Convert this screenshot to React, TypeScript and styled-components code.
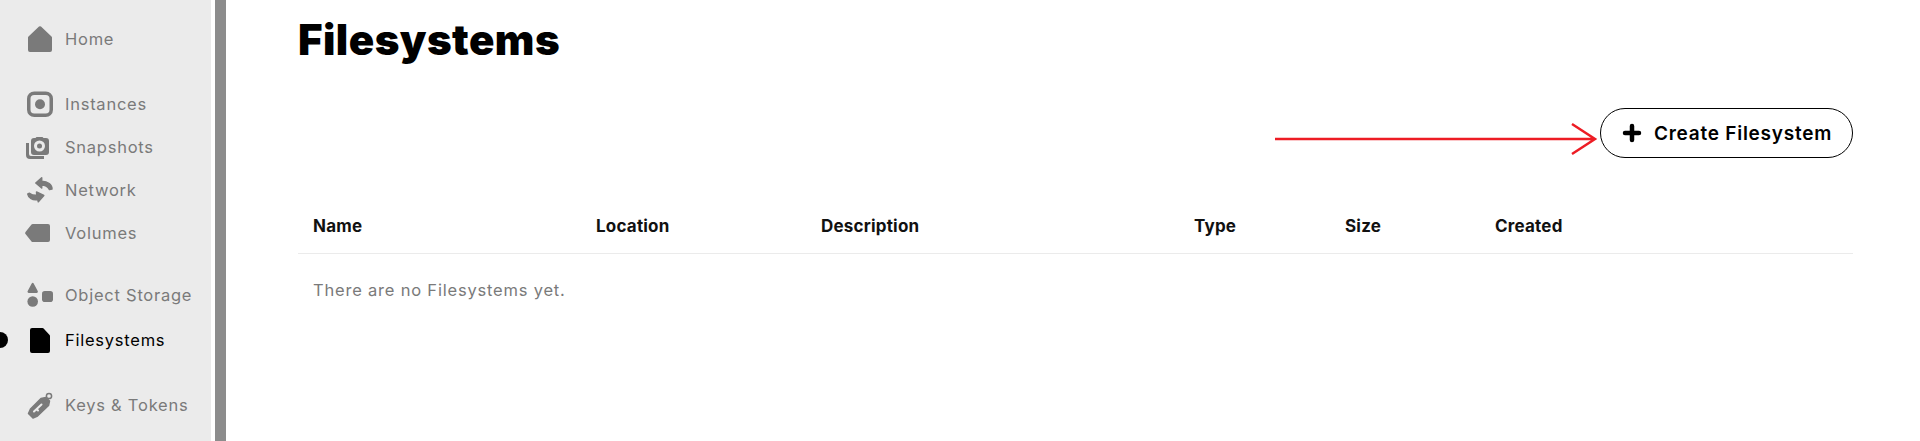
import React from 'react';
import styled, { createGlobalStyle } from 'styled-components';

const GlobalStyle = createGlobalStyle`
  html, body {
    margin: 0;
    padding: 0;
    height: 441px;
    overflow: hidden;
    background: #fff;
    font-family: Inter, "Liberation Sans", sans-serif;
  }
`;

const Shell = styled.div`
  display: flex;
  height: 441px;
  overflow: hidden;
`;

const Sidebar = styled.nav`
  width: 211px;
  flex: none;
  background: #ebebeb;
  padding-top: 17px;
  box-sizing: border-box;
`;

const Scrollbar = styled.div`
  width: 11px;
  flex: none;
  margin-left: 4px;
  background: #8c8c8c;
`;

const NavGroup = styled.div<{ $top?: number; $gap?: number }>`
  display: flex;
  flex-direction: column;
  gap: ${({ $gap }) => $gap ?? 0}px;
  margin-top: ${({ $top }) => $top ?? 0}px;
`;

const NavItem = styled.a<{ $active?: boolean }>`
  position: relative;
  display: flex;
  align-items: center;
  height: 43px;
  padding-left: 25px;
  font-size: 16.5px;
  letter-spacing: 0.75px;
  color: ${({ $active }) => ($active ? '#000' : '#7a7a7a')};
`;

const ActiveDot = styled.span`
  position: absolute;
  left: -8px;
  top: 14px;
  width: 16px;
  height: 16px;
  border-radius: 50%;
  background: #000;
`;

const NavIcon = styled.svg`
  width: 30px;
  height: 30px;
  flex: none;
  margin-right: 10px;
  fill: currentColor;
`;

const KeyHole = styled.path`
  fill: none;
  stroke: #ebebeb;
  stroke-width: 2;
  stroke-linecap: round;
`;

const Main = styled.main`
  flex: 1;
  min-width: 0;
  padding: 0 67px 0 72px;
`;

const Title = styled.h1`
  margin: 0;
  padding-top: 16px;
  height: 48px;
  font-size: 42px;
  line-height: 48px;
  font-weight: 900;
  letter-spacing: 0.45px;
  color: #000;
`;

const Toolbar = styled.div`
  position: relative;
  display: flex;
  justify-content: flex-end;
  margin-top: 44px;
`;

const CreateButton = styled.button`
  display: flex;
  align-items: center;
  gap: 12px;
  width: 253px;
  height: 50px;
  padding: 0 0 0 21px;
  box-sizing: border-box;
  border: 1px solid #000;
  border-radius: 25px;
  background: #fff;
  color: #000;
  font-family: inherit;
  font-size: 19px;
  font-weight: 600;
  letter-spacing: 0.75px;
`;

const Arrow = styled.svg`
  position: absolute;
  left: 977px;
  top: 14px;
  width: 325px;
  height: 34px;
`;

const TableHead = styled.div`
  display: grid;
  grid-template-columns: 283px 225px 373px 151px 150px 1fr;
  margin-top: 43px;
  padding: 0 0 3px 15px;
  height: 49px;
  align-items: center;
  border-bottom: 1px solid #ebebeb;
  font-size: 17px;
  font-weight: 700;
  letter-spacing: 0.2px;
  color: #111;
`;

const EmptyRow = styled.div`
  padding: 26px 15px;
  font-size: 16.5px;
  line-height: 20px;
  letter-spacing: 0.8px;
  color: #7a7a7a;
`;

const columns = ['Name', 'Location', 'Description', 'Type', 'Size', 'Created'];

export default function App() {
  return (
    <>
      <GlobalStyle />
      <Shell>
        <Sidebar>
          <NavGroup>
            <NavItem>
              <NavIcon viewBox="0 0 30 30">
                <path d="M14 2.600a1.500 1.500 0 0 1 2 0L26.500 12.500a1.500 1.500 0 0 1 .5 1.100V26a2 2 0 0 1-2 2H5a2 2 0 0 1-2-2V13.600a1.500 1.500 0 0 1 .5-1.100z" />
              </NavIcon>
              Home
            </NavItem>
          </NavGroup>
          <NavGroup $top={22}>
            <NavItem>
              <NavIcon viewBox="0 0 30 30">
                <rect x="3.750" y="4.250" width="22.500" height="22" rx="5.500" fill="none" stroke="currentColor" strokeWidth="3.500" />
                <circle cx="15" cy="15.250" r="5" />
              </NavIcon>
              Instances
            </NavItem>
            <NavItem>
              <NavIcon viewBox="0 0 30 30">
                <path d="M1 11v12a4 4 0 0 0 4 4h14v-3H6a2 2 0 0 1-2-2V11z" />
                <path fillRule="evenodd" d="M9 6h1.500l1-1h6l1 1H21a3 3 0 0 1 3 3v11a3 3 0 0 1-3 3H9a3 3 0 0 1-3-3V9a3 3 0 0 1 3-3zm5.500 2.500a5.500 5.500 0 1 0 0 11 5.500 5.500 0 0 0 0-11z" />
                <circle cx="14.500" cy="14" r="2.500" />
              </NavIcon>
              Snapshots
            </NavItem>
            <NavItem>
              <NavIcon viewBox="0 0 30 30">
                <path stroke="currentColor" strokeWidth="1.500" strokeLinejoin="round" d="M16.700 2.800 10.800 8l5.900 5V10c3.500 0 6 1.500 7.800 4.500l2.500-.5C27 9.500 23 6.500 16.700 6.300z" />
                <path stroke="currentColor" strokeWidth="1.500" strokeLinejoin="round" d="M13.300 26.800 18.800 20.500 11.500 17l.3 3.300C9 20.500 6.500 19.800 4.500 18.300l-1.700.7C3.500 23 7.500 25.500 12.800 24.500z" />
              </NavIcon>
              Network
            </NavItem>
            <NavItem>
              <NavIcon viewBox="0 0 30 30">
                <path d="M.7 13.700 6.500 6.600A1.500 1.500 0 0 1 7.700 6H23a2 2 0 0 1 2 2v14a2 2 0 0 1-2 2H7.700a1.500 1.500 0 0 1-1.200-.6L.7 16.300a2 2 0 0 1 0-2.600z" />
              </NavIcon>
              Volumes
            </NavItem>
          </NavGroup>
          <NavGroup $top={19} $gap={2}>
            <NavItem>
              <NavIcon viewBox="0 0 30 30">
                <path d="M6.700 3.600a1.200 1.200 0 0 1 2 0l4 7.400a1.300 1.300 0 0 1-1.100 2H3.800a1.300 1.300 0 0 1-1.100-2z" />
                <circle cx="7.700" cy="21.500" r="5.300" />
                <rect x="17" y="11" width="11" height="11" rx="2.800" />
              </NavIcon>
              Object Storage
            </NavItem>
            <NavItem $active>
              <ActiveDot />
              <NavIcon viewBox="0 0 30 30">
                <path d="M7 3h10.500a1.500 1.500 0 0 1 1.100.5l6 6.500a1.500 1.500 0 0 1 .4 1V26a2 2 0 0 1-2 2H7a2 2 0 0 1-2-2V5a2 2 0 0 1 2-2z" />
              </NavIcon>
              Filesystems
            </NavItem>
          </NavGroup>
          <NavGroup $top={22}>
            <NavItem>
              <NavIcon viewBox="0 0 30 30">
                <path stroke="currentColor" strokeWidth="1.500" strokeLinejoin="round" d="M16 8.500 21 7.500 24.500 11 23.500 15.500 12.500 26 8 28 3.500 23.500 5.500 19z" />
                <KeyHole d="M16.500 14.500 9 21.500M11.500 19l1.500 1.500" />
                <circle cx="24" cy="6" r="2.600" fill="none" stroke="currentColor" strokeWidth="1.500" />
              </NavIcon>
              Keys &amp; Tokens
            </NavItem>
          </NavGroup>
        </Sidebar>
        <Scrollbar />
        <Main>
          <Title>Filesystems</Title>
          <Toolbar>
            <Arrow viewBox="0 0 325 34">
              <path d="M0 17h320M297 2l23 15-23 15" fill="none" stroke="#ed1c24" strokeWidth="2.500" />
            </Arrow>
            <CreateButton>
              <svg width="20" height="20" viewBox="0 0 20 20">
                <path d="M10 3v14M3 10h14" stroke="#000" strokeWidth="4.500" strokeLinecap="round" />
              </svg>
              Create Filesystem
            </CreateButton>
          </Toolbar>
          <TableHead>
            {columns.map((c) => (
              <span key={c}>{c}</span>
            ))}
          </TableHead>
          <EmptyRow>There are no Filesystems yet.</EmptyRow>
        </Main>
      </Shell>
    </>
  );
}
